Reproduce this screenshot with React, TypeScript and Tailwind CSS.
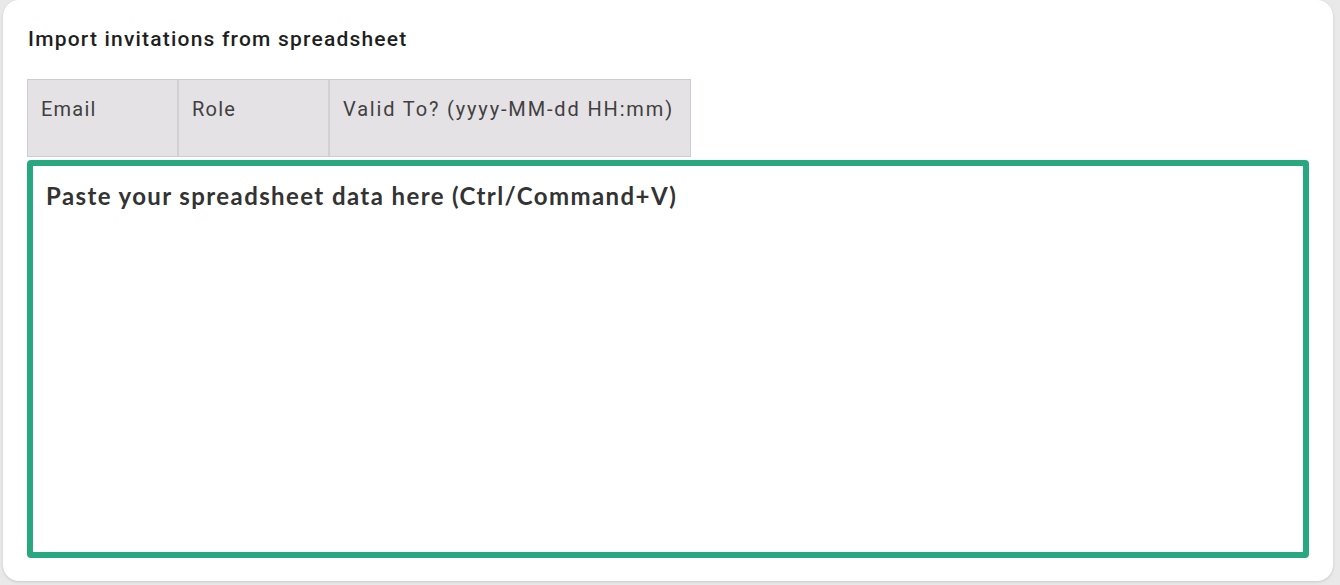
import React from "react";

export default function App() {
  return (
    <div className="w-[1340px] h-[585px] bg-[#e9e9ea] overflow-hidden">
      <div className="ml-[3px] mr-[7px] h-[581px] bg-white rounded-[16px] shadow-[0_1px_3px_rgba(0,0,0,0.14)] pt-[27px] pl-[24px] pr-[24px]">
        <h2
          className="pl-[1px] text-[21px] leading-[24px] font-medium text-[#1f1f1f] tracking-[1.2px]"
          style={{ fontFamily: "Roboto, sans-serif" }}
        >
          Import invitations from spreadsheet
        </h2>
        <div
          className="mt-[28px] flex w-[664px] h-[78px] bg-[#e5e2e5] border border-[#cfcccf]"
          style={{ fontFamily: "Roboto, sans-serif" }}
        >
          <div className="w-[151px] border-r-2 border-[#d3d0d3] pl-[13px] pt-[17px] text-[20px] leading-[24px] text-[#404040] tracking-[1.2px]">
            Email
          </div>
          <div className="w-[151px] border-r-2 border-[#d3d0d3] pl-[13px] pt-[17px] text-[20px] leading-[24px] text-[#404040] tracking-[1.2px]">
            Role
          </div>
          <div className="flex-1 pl-[13px] pt-[17px] text-[20px] leading-[24px] text-[#404040] tracking-[1.85px]">
            Valid To? (yyyy-MM-dd HH:mm)
          </div>
        </div>
        <div className="mt-[3px] h-[398px] border-[6px] border-[#27a880] rounded-[4px] pl-[13px] pt-[16px]">
          <p
            className="text-[24px] leading-[28px] font-bold text-[#333333] tracking-[1.4px]"
            style={{ fontFamily: "Lato, sans-serif" }}
          >
            Paste your spreadsheet data here (Ctrl/Command+V)
          </p>
        </div>
      </div>
    </div>
  );
}
